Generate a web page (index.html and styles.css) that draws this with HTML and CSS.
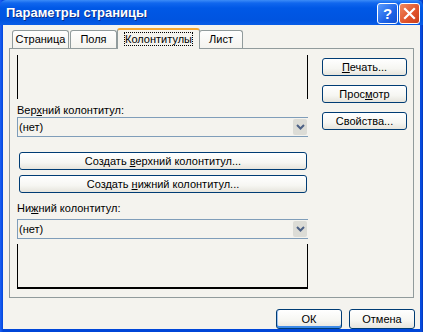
FILE: index.html
```html
<!DOCTYPE html>
<html lang="ru">
<head>
    <meta charset="UTF-8">
    <title>Параметры страницы</title>
    <link rel="stylesheet" href="styles.css">
</head>
<body>
<div class="window">
    <!-- заголовок окна -->
    <div class="titlebar">
        <span class="title">Параметры страницы</span>
        <span class="tb-btn help">?</span>
        <span class="tb-btn close">
            <svg width="13" height="13" viewBox="0 0 13 13"><path d="M2 2L11 11M11 2L2 11" stroke="#fff" stroke-width="2.2" stroke-linecap="square"/></svg>
        </span>
    </div>

    <div class="dialog">
        <div class="tabs">
            <div class="tab t1">Страница</div>
            <div class="tab t2">Поля</div>
            <div class="tab active"><span class="focus">Колонтитулы</span></div>
            <div class="tab t4">Лист</div>
        </div>

        <div class="panel">
            <div class="left-col">
                <div class="preview top"></div>
                <div class="label">Вер<u>х</u>ний колонтитул:</div>
                <div class="combo">
                    <span class="combo-text">(нет)</span>
                    <span class="drop"><svg width="9" height="6" viewBox="0 0 9 6"><path d="M1 1L4.5 4.5L8 1" fill="none" stroke="#4d6185" stroke-width="2"/></svg></span>
                </div>
                <button class="btn wide first">Создать <u>в</u>ерхний колонтитул...</button>
                <button class="btn wide">Создать <u>н</u>ижний колонтитул...</button>
                <div class="label second">Ни<u>ж</u>ний колонтитул:</div>
                <div class="combo">
                    <span class="combo-text">(нет)</span>
                    <span class="drop"><svg width="9" height="6" viewBox="0 0 9 6"><path d="M1 1L4.5 4.5L8 1" fill="none" stroke="#4d6185" stroke-width="2"/></svg></span>
                </div>
                <div class="preview bottom"></div>
            </div>
            <div class="right-col">
                <button class="btn"><u>П</u>ечать...</button>
                <button class="btn">Прос<u>м</u>отр</button>
                <button class="btn">Свойства...</button>
            </div>
        </div>

        <div class="footer">
            <button class="btn action default">ОК</button>
            <button class="btn action">Отмена</button>
        </div>
    </div>
</div>
</body>
</html>
```

FILE: styles.css
```css
/* окно в стиле Windows XP */
body {
    margin: 0;
    width: 423px;
    height: 332px;
    overflow: hidden;
    font-family: "Liberation Sans", Arial, sans-serif;
    font-size: 11px;
    color: #000;
}

.window {
    display: flex;
    flex-direction: column;
    height: 332px;
    background: linear-gradient(to right, #1c5ff3 0, #0a4fe6 2px, #0046d8 3px, #0046d8 420px, #0a4fe6 421px, #0036b8 423px);
}

.titlebar {
    height: 28px;
    display: flex;
    align-items: center;
    padding: 0 3px 0 6px;
    background: linear-gradient(to bottom, #3c8cf7 0, #1167ee 3px, #0058e6 8px, #0054e0 20px, #0a5ee8 26px, #0a55df 28px);
    border-radius: 6px 6px 0 0;
}

.title {
    flex: 1;
    color: #fff;
    font-weight: bold;
    font-size: 13px;
    text-shadow: 1px 1px 0 #0b2f8a;
}

.tb-btn {
    width: 19px;
    height: 19px;
    border: 1px solid #fff;
    border-radius: 3px;
    display: flex;
    align-items: center;
    justify-content: center;
    color: #fff;
    font-weight: bold;
    font-size: 15px;
    margin-top: 1px;
}

.help {
    background: linear-gradient(135deg, #5a9cff, #1d63e6 60%, #1450d0);
    margin-right: 1px;
}

.close {
    background: linear-gradient(135deg, #f08a60, #e0522a 60%, #c83e1c);
}

.dialog {
    flex: 1;
    margin: 0 3px 3px 3px;
    background: #f4f3ee;
    display: flex;
    flex-direction: column;
}

/* вкладки */
.tabs {
    display: flex;
    align-items: flex-end;
    padding: 3px 0 0 9px;
    height: 20px;
}

.tab {
    box-sizing: border-box;
    height: 18px;
    line-height: 17px;
    text-align: center;
    border: 1px solid #919b9c;
    border-bottom: none;
    border-radius: 3px 3px 0 0;
    background: linear-gradient(to bottom, #fefefe, #f4f3ee);
    margin-right: 1px;
}

.t1 { width: 57px; }
.t2 { width: 47px; }
.t4 { width: 44px; }

.tab.active {
    width: 83px;
    height: 21px;
    line-height: 18px;
    margin: 0 -1px -1px -1px;
    border-top: 2px solid #f5a833;
    background: #f4f3ee;
    position: relative;
    z-index: 1;
}

.focus {
    outline: 1px dotted #000;
    outline-offset: 0;
}

.panel {
    display: flex;
    gap: 14px;
    margin: 0 6px 0 6px;
    height: 242px;
    border: 1px solid #919b9c;
    padding: 6px 5px 0 7px;
}

.left-col {
    width: 291px;
    display: flex;
    flex-direction: column;
}

.right-col {
    width: 85px;
    display: flex;
    flex-direction: column;
    gap: 9px;
    padding-top: 3px;
}

.preview {
    border-left: 1px solid #000;
    border-right: 1px solid #000;
}

.preview.top {
    height: 44px;
}

.preview.bottom {
    height: 43px;
    margin-top: 5px;
    border-bottom: 2px solid #000;
}

.label {
    height: 13px;
    line-height: 13px;
    margin: 5px 0 0 0;
}

.label.second {
    margin: 9px 0 4px 0;
}

.combo {
    height: 18px;
    border: 1px solid #7f9db9;
    border-right: none;
    display: flex;
    align-items: center;
    padding: 0 1px 0 1px;
}

.combo-text {
    flex: 1;
}

.drop {
    width: 14px;
    height: 16px;
    background: #dcdcd6;
    border-radius: 2px;
    display: flex;
    align-items: center;
    justify-content: center;
}

/* кнопки */
.btn {
    font: inherit;
    color: #000;
    height: 18px;
    padding: 0;
    border: 1px solid #003c74;
    border-radius: 3px;
    background: linear-gradient(to bottom, #fff 0, #f6f6f2 60%, #e6e4dc 100%);
}

.btn.wide {
    margin: 0 1px 0 2px;
}

.btn.wide.first {
    margin-top: 15px;
    margin-bottom: 5px;
}

.footer {
    display: flex;
    justify-content: flex-end;
    gap: 7px;
    padding: 11px 5px 0 0;
}

.btn.action {
    width: 66px;
    height: 20px;
}

.btn.default {
    box-shadow: inset 0 -2px 0 #3d8ae8, inset 1px 0 0 #9cc0f0;
}
```
